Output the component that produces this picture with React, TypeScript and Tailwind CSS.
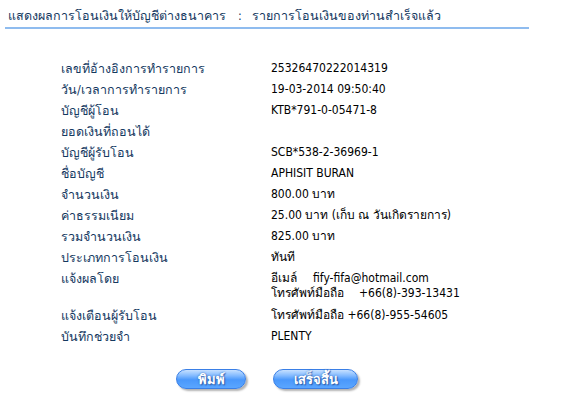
import React from 'react';

const rows: { label: string; value: React.ReactNode; tall?: boolean }[] = [
  { label: 'เลขที่อ้างอิงการทำรายการ', value: '25326470222014319' },
  { label: 'วัน/เวลาการทำรายการ', value: '19-03-2014 09:50:40' },
  { label: 'บัญชีผู้โอน', value: 'KTB*791-0-05471-8' },
  { label: 'ยอดเงินที่ถอนได้', value: '' },
  { label: 'บัญชีผู้รับโอน', value: 'SCB*538-2-36969-1' },
  { label: 'ชื่อบัญชี', value: 'APHISIT BURAN' },
  { label: 'จำนวนเงิน', value: '800.00 บาท' },
  { label: 'ค่าธรรมเนียม', value: '25.00 บาท (เก็บ ณ วันเกิดรายการ)' },
  { label: 'รวมจำนวนเงิน', value: '825.00 บาท' },
  { label: 'ประเภทการโอนเงิน', value: 'ทันที' },
  {
    label: 'แจ้งผลโดย',
    tall: true,
    value: (
      <div className="flex flex-col leading-[15px]">
        <div className="flex">
          <span className="w-[42px]">อีเมล์</span>
          <span>fify-fifa@hotmail.com</span>
        </div>
        <div className="flex">
          <span className="w-[88px]">โทรศัพท์มือถือ</span>
          <span>+66(8)-393-13431</span>
        </div>
      </div>
    ),
  },
  { label: 'แจ้งเตือนผู้รับโอน', value: 'โทรศัพท์มือถือ +66(8)-955-54605' },
  { label: 'บันทึกช่วยจำ', value: 'PLENTY' },
];

function PillButton({ children, width }: { children: React.ReactNode; width: string }) {
  return (
    <button
      type="button"
      className={`${width} h-[20px] rounded-full border border-[#3a7fe6] bg-[linear-gradient(to_bottom,#c6e0ff_0%,#86bcff_30%,#4a98fb_55%,#5aa6ff_100%)] text-white font-bold text-[13px] leading-none flex items-center justify-center shadow-[2px_2px_2px_rgba(0,0,0,0.3)] [text-shadow:0_0_2px_#2a5fb0,1px_1px_1px_#2a5fb0]`}
    >
      {children}
    </button>
  );
}

export default function App() {
  return (
    <div
      className="w-[562px] h-[400px] bg-white overflow-hidden"
      style={{ fontFamily: 'Tahoma, "DejaVu Sans Condensed", "DejaVu Sans", "Noto Sans", sans-serif' }}
    >
      <div className="pl-[8px] pt-[7px] w-[529px]">
        <div className="flex text-[12.5px] leading-[18px] text-[#15395f] whitespace-nowrap">
          <span>แสดงผลการโอนเงินให้บัญชีต่างธนาคาร</span>
          <span className="ml-[12px]">:</span>
          <span className="ml-[10px]">รายการโอนเงินของท่านสำเร็จแล้ว</span>
        </div>
        <div className="mt-[2px] -ml-[3px] h-[2px] bg-[#8fbcef]" />
      </div>

      <div className="mt-[29px] pl-[61px] flex flex-col text-[12px]">
        {rows.map((r, i) => (
          <div
            key={i}
            className={`flex items-start pt-[3px] ${r.tall ? 'min-h-[37px]' : 'min-h-[21px]'}`}
          >
            <div className="w-[210px] text-[#15395f] text-[12.5px] leading-[15px]">{r.label}</div>
            <div className="text-black leading-[15px]">{r.value}</div>
          </div>
        ))}
      </div>

      <div className="mt-[22px] pl-[176px] flex gap-[27px]">
        <PillButton width="w-[70px]">พิมพ์</PillButton>
        <PillButton width="w-[85px]">เสร็จสิ้น</PillButton>
      </div>
    </div>
  );
}
